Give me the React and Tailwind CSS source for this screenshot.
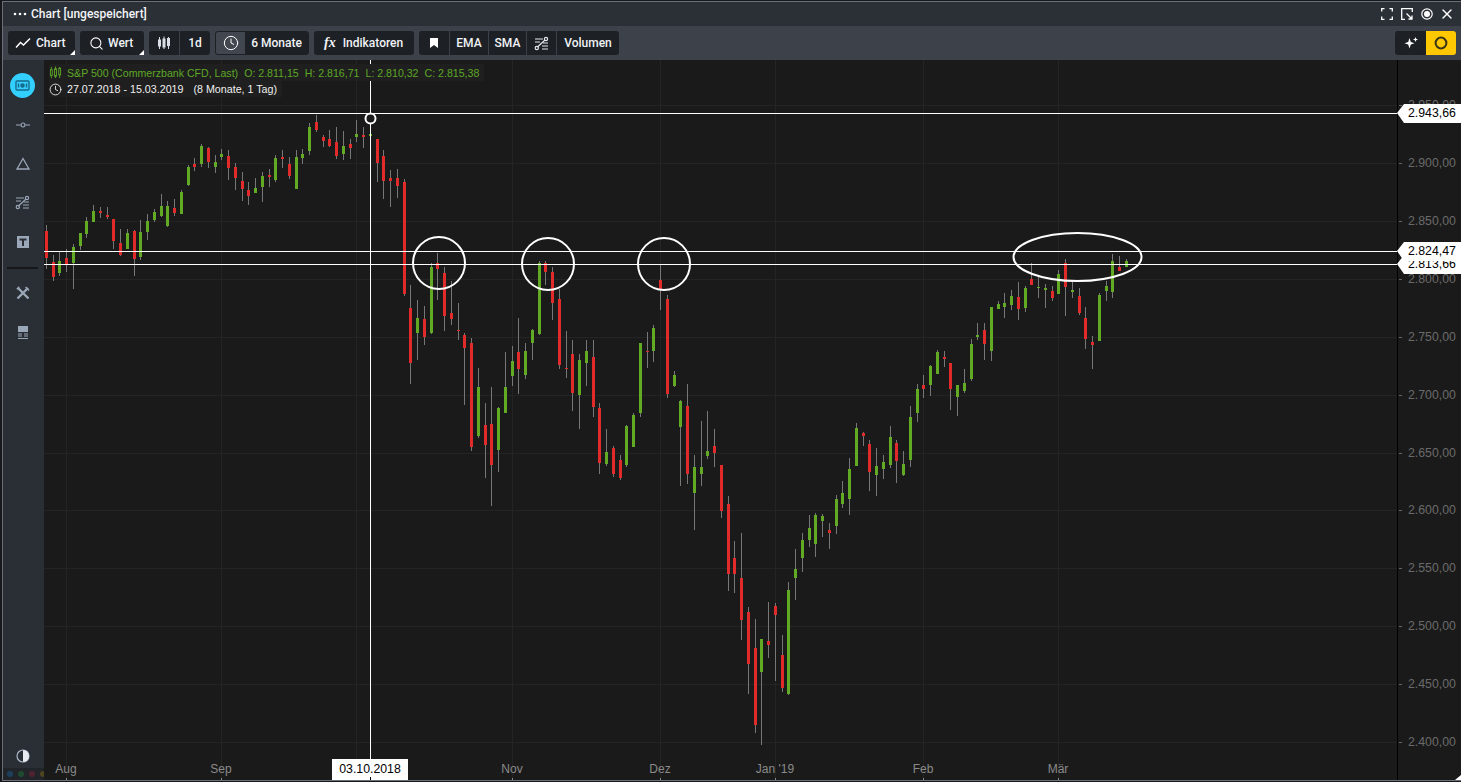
import React from 'react';
import { Clock, Search, X } from 'lucide-react';

// [rot?, Körper oben, Körper unten, Docht oben, Docht unten] in Pixeln
const candles = [
  [1,231,258,225,269],[1,262,277,255,281],[0,261,273,252,276],[1,258,264,249,272],[0,247,263,244,289],
  [0,233,246,233,250],[0,221,234,217,238],[0,211,222,205,222],[1,211,213,207,218],[1,215,217,207,219],
  [1,219,241,219,249],[1,243,255,229,256],[0,233,249,229,249],[1,231,259,230,276],[0,232,257,220,260],
  [0,221,232,214,240],[0,212,220,209,222],[0,206,216,194,217],[0,206,226,201,227],[1,208,213,199,216],
  [0,192,214,190,214],[0,167,185,165,186],[1,164,167,158,171],[0,146,164,144,167],[1,148,162,147,168],
  [0,162,167,155,173],[0,154,157,149,160],[1,156,168,150,180],[1,167,178,163,190],[1,181,189,172,201],
  [1,190,196,182,205],[0,188,193,178,193],[0,176,187,172,202],[1,175,177,169,187],[0,158,180,155,182],
  [1,157,159,150,168],[1,164,176,157,179],[0,157,189,150,189],[0,154,158,149,164],[0,127,151,123,155],
  [1,122,130,115,132],[1,137,141,135,147],[1,139,146,130,147],[1,142,156,127,159],[0,146,154,131,160],
  [1,144,148,139,159],[0,134,137,120,142],[1,135,137,127,148],[0,134,136,134,136],[1,139,163,139,182],
  [1,156,181,150,199],[1,178,181,170,207],[1,178,186,169,198],[1,182,294,179,296],[1,308,363,285,384],
  [0,318,333,300,360],[1,319,337,306,345],[0,267,333,263,334],[1,263,269,253,300],[1,273,316,267,331],
  [1,313,319,281,325],[1,330,331,303,340],[1,335,348,333,405],[1,343,447,338,451],[0,387,436,368,438],
  [1,425,445,403,478],[1,424,465,387,506],[0,408,450,407,472],[0,387,413,352,413],[0,361,376,346,386],
  [1,352,369,318,394],[0,351,375,343,379],[0,330,343,329,360],[0,263,334,261,335],[1,263,272,261,285],
  [1,272,303,267,320],[1,299,365,289,369],[1,368,369,331,378],[1,354,393,340,411],[0,360,395,354,429],
  [0,351,363,340,386],[1,357,407,340,417],[1,408,463,403,474],[0,452,464,429,466],[1,448,474,446,477],
  [1,460,478,455,480],[0,426,465,425,467],[0,415,447,413,447],[0,343,413,343,417],[1,351,352,332,368],
  [0,328,351,325,362],[1,280,290,265,310],[1,299,394,295,398],[0,375,386,371,387],[0,401,427,400,486],
  [1,406,474,384,484],[0,467,493,455,530],[0,467,474,421,486],[0,451,456,411,459],[1,446,453,429,467],
  [1,465,511,465,518],[1,504,574,496,591],[1,558,574,541,593],[1,578,620,533,640],[1,612,664,607,694],
  [1,648,725,619,733],[0,639,672,639,745],[1,641,645,602,658],[1,606,615,603,681],[1,655,688,635,692],
  [0,590,694,582,695],[0,569,578,549,600],[0,540,558,533,572],[0,528,540,515,547],[0,515,544,513,557],
  [0,516,521,514,537],[1,530,533,523,549],[0,499,526,495,534],[0,493,504,481,508],[0,469,499,458,515],
  [0,428,466,423,466],[1,433,436,432,446],[1,444,472,440,491],[0,466,475,448,496],[0,462,469,455,479],
  [0,437,465,426,468],[1,443,461,440,483],[0,464,475,451,476],[0,417,460,406,467],[0,389,413,384,422],
  [1,385,389,375,398],[0,366,385,365,396],[0,352,374,350,374],[1,357,359,351,367],[1,363,389,363,410],
  [0,385,397,385,416],[0,383,391,369,393],[0,344,379,339,381],[0,335,337,323,340],[1,330,344,323,360],
  [0,307,351,307,361],[0,304,309,301,309],[0,303,307,293,318],[0,296,305,290,310],[1,297,309,282,320],
  [0,288,308,286,312],[1,279,285,263,285],[0,287,288,276,298],[0,288,290,284,308],[1,291,298,286,301],
  [0,274,294,270,294],[1,263,287,259,316],[0,290,292,282,298],[1,296,313,288,315],[1,318,339,307,349],
  [1,342,345,336,369],[0,295,341,293,341],[0,286,291,281,301],[0,261,292,254,298],[1,267,271,256,271],
  [0,261,267,259,267],
];

const priceTicks = [
  ['2.950,00', 105], ['2.900,00', 163], ['2.850,00', 221], ['2.800,00', 279], ['2.750,00', 337], ['2.700,00', 395],
  ['2.650,00', 453], ['2.600,00', 510], ['2.550,00', 568], ['2.500,00', 626], ['2.450,00', 684], ['2.400,00', 742],
];
const monthTicks = [['Aug', 66], ['Sep', 221], ['', 356], ['Nov', 512], ['Dez', 660], ["Jan '19", 775], ['Feb', 923], ['Mär', 1058]];

const PriceTag = ({ y, label }) => (
  <g>
    <polygon points={`1397,${y} 1404,${y - 9} 1461,${y - 9} 1461,${y + 10} 1404,${y + 10}`} fill="#ffffff" />
    <text x="1408" y={y + 4} fontSize="12.3" fill="#000000">{label}</text>
  </g>
);

const Chart = () => (
  <svg viewBox="44 60 1417 720" className="block w-full h-full" style={{ fontFamily: '"Liberation Sans", Arial, sans-serif' }}>
    <g shapeRendering="crispEdges">
      {priceTicks.map(([label, y]) => (
        <rect key={label} x="44" y={y} width="1353" height="1" fill="#242424" />
      ))}
      {monthTicks.map(([label, x]) => (
        <rect key={x} x={x} y="60" width="1" height="720" fill="#242424" />
      ))}
      {candles.map(([red, top, bottom, wickTop, wickBottom], i) => {
        const x = Math.floor(46.3 + i * 6.75);
        return (
          <g key={i}>
            <rect x={x} y={wickTop} width="1" height={wickBottom - wickTop} fill="#777777" />
            <rect x={x - 1} y={top} width="3" height={Math.max(bottom - top, 1)} fill={red ? '#e12a2a' : '#62aa24'} />
          </g>
        );
      })}
      <rect x="1397" y="60" width="1" height="720" fill="#000000" />
      {priceTicks.map(([label, y]) => (
        <rect key={label} x="1399" y={y} width="3" height="1" fill="#666666" />
      ))}
      {monthTicks.map(([label, x]) => (
        <rect key={x} x={x} y="778" width="1" height="2" fill="#888888" />
      ))}
      <rect x="44" y="113" width="1353" height="1" fill="#ffffff" />
      <rect x="44" y="251" width="1353" height="1" fill="#ffffff" />
      <rect x="44" y="264" width="1353" height="1" fill="#ffffff" />
      <rect x="370" y="60" width="1" height="700" fill="#ffffff" />
    </g>

    {priceTicks.map(([label, y]) => (
      <text key={label} x="1408" y={y + 3.5} fontSize="12.3" fill="#6a6a6a">{label}</text>
    ))}
    {monthTicks.map(([label, x]) => (
      <text key={x} x={x} y="773" fontSize="12" fill="#8a8a8a" textAnchor="middle">{label}</text>
    ))}

    <g fill="none" stroke="#ffffff" strokeWidth="2">
      <circle cx="439" cy="263" r="26" />
      <circle cx="548" cy="264" r="26" />
      <circle cx="664" cy="264" r="26" />
      <ellipse cx="1077.5" cy="257" rx="64" ry="24" />
      <circle cx="370.5" cy="118.5" r="5" fill="#1a1a1a" />
    </g>

    <PriceTag y={264} label="2.813,66" />
    <PriceTag y={251} label="2.824,47" />
    <PriceTag y={113} label="2.943,66" />

    <rect x="332" y="759" width="76" height="21" fill="#ffffff" />
    <text x="370" y="773" fontSize="12.3" fill="#000000" textAnchor="middle">03.10.2018</text>
    <rect x="370" y="777" width="1" height="3" fill="#000000" />
    <polygon points="1461,775 1461,780 1455,780" fill="#ffffff" />
  </svg>
);

const LineIcon = () => (
  <svg width="16" height="12" viewBox="0 0 16 12" fill="none" stroke="#ffffff" strokeWidth="1.5">
    <path d="M1 10.5 L5.5 5.5 L8.5 8 L15 1.5" />
  </svg>
);

const CandleIcon = ({ color = '#d8dde6', size = 14, hollow = false }) => (
  <svg width={size} height={size} viewBox="0 0 14 14" fill="none" stroke={color} strokeWidth="1">
    <path d="M2.5 1 V4 M2.5 10 V13 M7 0.5 V3 M7 11 V13 M11.5 1 V2.5 M11.5 9.5 V13" />
    <rect x="1.5" y="4" width="2" height="6" fill={hollow ? 'none' : color} />
    <rect x="6" y="3" width="2" height="8" fill={hollow ? 'none' : color} />
    <rect x="10.5" y="2.5" width="2" height="7" fill={hollow ? 'none' : color} />
  </svg>
);

const SliderIcon = ({ color = '#e6e9ee' }) => (
  <svg width="15" height="15" viewBox="0 0 15 15" fill="none" stroke={color} strokeWidth="1.2">
    <path d="M1 3 H9 M1 6 H6 M9 7 H14 M8 10 H14 M8 13 H14" />
    <path d="M3.5 11 L11 4" />
    <circle cx="12" cy="3" r="1.6" />
    <circle cx="2.8" cy="12" r="1.6" />
  </svg>
);

const Corner = () => (
  <svg width="5" height="5" viewBox="0 0 5 5" className="absolute right-0 bottom-0">
    <polygon points="5,0 5,5 0,5" fill="#ffffff" />
  </svg>
);

const Group = ({ className = '', children }) => (
  <div className={`relative flex items-center h-6 rounded-[3px] bg-[#1d2025] text-[12px] font-medium text-[#f0f2f5] ${className}`}>
    {children}
  </div>
);

const Toolbar = () => (
  <div className="flex items-center gap-[5px] h-[34px] pl-[5px] pr-[5px] bg-[#3d4149]">
    <Group className="w-[67px] pl-[7px] gap-[5px]"><LineIcon />Chart<Corner /></Group>
    <Group className="w-[64px] pl-[9px] gap-[4px]"><Search size={15} strokeWidth={1.7} color="#ffffff" />Wert<Corner /></Group>
    <Group className="w-[61px]">
      <div className="flex items-center justify-center w-[31px] h-full border-r border-[#3d4149]"><CandleIcon /></div>
      <div className="flex-1 text-center">1d</div>
    </Group>
    <Group className="w-[94px] border border-[#1d2025] overflow-hidden">
      <div className="flex items-center justify-center w-[29px] h-full bg-[#42464e]"><Clock size={16} strokeWidth={1.5} color="#ffffff" /></div>
      <div className="flex-1 text-center">6 Monate</div>
    </Group>
    <Group className="w-[100px] pl-[10px] gap-[7px]">
      <span className="font-['Liberation_Serif',serif] italic font-bold text-[14px] leading-none">fx</span>
      Indikatoren
    </Group>
    <Group className="w-[200px]">
      <div className="flex items-center justify-center w-[30px] h-full">
        <svg width="8" height="10" viewBox="0 0 8 10"><path d="M0 0 H8 V10 L4 7 L0 10 Z" fill="#ffffff" /></svg>
      </div>
      <div className="flex items-center justify-center w-[39px] h-full border-l border-[#3d4149]">EMA</div>
      <div className="flex items-center justify-center w-[38px] h-full border-l border-[#3d4149]">SMA</div>
      <div className="flex items-center justify-center w-[30px] h-full border-l border-[#3d4149]"><SliderIcon /></div>
      <div className="flex flex-1 items-center justify-center h-full border-l border-[#3d4149]">Volumen</div>
    </Group>
    <div className="ml-auto flex h-6 w-[61px] rounded-[3px] overflow-hidden">
      <div className="flex items-center justify-center w-[31px] bg-[#1d2025]">
        <svg width="14" height="14" viewBox="0 0 14 14" fill="#ffffff">
          <path d="M5.5 2 L6.8 6 L10.5 7.3 L6.8 8.6 L5.5 12.5 L4.2 8.6 L0.5 7.3 L4.2 6 Z" />
          <path d="M11.5 1 L12.2 2.8 L14 3.5 L12.2 4.2 L11.5 6 L10.8 4.2 L9 3.5 L10.8 2.8 Z" />
        </svg>
      </div>
      <div className="flex flex-1 items-center justify-center bg-[#ffc800]">
        <svg width="14" height="14" viewBox="0 0 14 14" fill="none" stroke="#3a3416" strokeWidth="2"><circle cx="7" cy="7" r="5.4" /></svg>
      </div>
    </div>
  </div>
);

const TitleBar = () => (
  <div className="flex items-center h-6 pl-[10px] pr-[8px] bg-[#2b2f36] text-[12px] font-medium text-[#f2f4f7]">
    <svg width="14" height="4" viewBox="0 0 14 4" className="mr-[4px]" fill="#ffffff">
      <circle cx="2" cy="2" r="1.3" /><circle cx="7" cy="2" r="1.3" /><circle cx="12" cy="2" r="1.3" />
    </svg>
    Chart [ungespeichert]
    <div className="ml-auto flex items-center gap-[8px]">
      <svg width="12" height="12" viewBox="0 0 12 12" fill="none" stroke="#ffffff" strokeWidth="1.3">
        <path d="M0.7 3.5 V0.7 H3.5 M8.5 0.7 H11.3 V3.5 M11.3 8.5 V11.3 H8.5 M3.5 11.3 H0.7 V8.5" />
      </svg>
      <svg width="12" height="12" viewBox="0 0 12 12" fill="none" stroke="#ffffff" strokeWidth="1.3">
        <path d="M11.3 4 V0.7 H0.7 V11.3 H4 M5.5 5.5 L11 11 M11 7.5 V11 H7.5" />
      </svg>
      <svg width="12" height="12" viewBox="0 0 12 12" fill="#ffffff" stroke="#ffffff" strokeWidth="1.2">
        <circle cx="6" cy="6" r="5.2" fill="none" /><circle cx="6" cy="6" r="2.4" />
      </svg>
      <X size={16} strokeWidth={2} color="#ffffff" className="-mx-[2px]" />
    </div>
  </div>
);

const sideIcon = '#9aa7b8';

const Sidebar = () => (
  <div className="relative flex flex-col items-center w-[41px] shrink-0 pr-[2px] bg-[#2a2e35]">
    <div className="flex items-center justify-center mt-[13px] w-[25px] h-[25px] rounded-full bg-[#33cfff]">
      <svg width="15" height="11" viewBox="0 0 15 11" fill="none" stroke="#176a8a" strokeWidth="1.4">
        <rect x="1" y="1" width="13" height="9" rx="1" /><circle cx="7.5" cy="5.5" r="1.6" fill="#176a8a" />
        <path d="M3.5 3.5 V7.5 M11.5 3.5 V7.5" />
      </svg>
    </div>
    <svg width="14" height="6" viewBox="0 0 14 6" className="mt-[24px]" fill="none" stroke={sideIcon} strokeWidth="1.2">
      <path d="M0 3 H4.5 M9.5 3 H14" /><circle cx="7" cy="3" r="2" />
    </svg>
    <svg width="14" height="13" viewBox="0 0 14 13" className="mt-[29px]" fill="none" stroke={sideIcon} strokeWidth="1.3">
      <path d="M7 1.5 L13 12 H1 Z" />
    </svg>
    <div className="mt-[25px]"><SliderIcon color={sideIcon} /></div>
    <svg width="12" height="12" viewBox="0 0 12 12" className="mt-[26px]">
      <rect width="12" height="12" fill={sideIcon} />
      <path d="M2.5 2.5 H9.5 V4.5 H7 V10 H5 V4.5 H2.5 Z" fill="#2a2e35" />
    </svg>
    <div className="mt-[19px] w-[31px] h-[2px] bg-[#16181b]" />
    <svg width="14" height="14" viewBox="0 0 14 14" className="mt-[17px]" fill="none" stroke={sideIcon} strokeWidth="2.4">
      <path d="M1.5 12.5 L12 2 M2 2 L12.5 12.5" />
      <path d="M9.5 1 L13 4.5 M0.8 3.2 L3.2 0.8" strokeWidth="1.4" />
    </svg>
    <svg width="12" height="13" viewBox="0 0 12 13" className="mt-[26px]">
      <rect x="1" y="0" width="10" height="6" fill={sideIcon} />
      <path d="M1 8 H5 M7 8 H11 M1 10 H5 M7 10 H11 M1 12.5 H11" stroke={sideIcon} strokeWidth="1.1" />
    </svg>
    <svg width="14" height="14" viewBox="0 0 14 14" className="mt-auto mb-[17px]">
      <circle cx="7" cy="7" r="6" fill="none" stroke="#aeb9c9" strokeWidth="1.2" />
      <path d="M7 1 A6 6 0 0 1 7 13 Z" fill="#e8ebef" />
    </svg>
    <div className="absolute left-0 bottom-0 flex items-center gap-[5px] w-[48px] h-3 pl-[4px] bg-[#212429]">
      <span className="w-[6px] h-[6px] rounded-full bg-[#1d3f5c]" />
      <span className="w-[6px] h-[6px] rounded-full bg-[#1f4a30]" />
      <span className="w-[6px] h-[6px] rounded-full bg-[#4f2230]" />
      <span className="w-[6px] h-[6px] rounded-full bg-[#4f4420]" />
    </div>
  </div>
);

const Legend = () => (
  <div className="absolute left-[5px] top-[4px] flex flex-col items-start font-['Liberation_Sans',Arial,sans-serif] leading-[16px]">
    <div className="flex items-center h-[17px] pr-[5px] text-[10.6px] bg-[#1f1f1f] text-[#5ea826]">
      <CandleIcon color="#5ea826" size={13} hollow />
      <span className="ml-[5px] mr-[6px]">S&amp;P 500 (Commerzbank CFD, Last)</span>
      <span className="mr-[6px]">O: 2.811,15</span>
      <span className="mr-[6px]">H: 2.816,71</span>
      <span className="mr-[6px]">L: 2.810,32</span>
      <span>C: 2.815,38</span>
    </div>
    <div className="flex items-center h-4 pr-[5px] text-[10.7px] bg-[#1f1f1f] text-[#f0f0f0]">
      <Clock size={13} strokeWidth={1.5} color="#ffffff" />
      <span className="ml-[5px] mr-[10px]">27.07.2018 - 15.03.2019</span>
      <span>(8 Monate, 1 Tag)</span>
    </div>
  </div>
);

export default function App() {
  return (
    <div className="h-[782px] w-full overflow-hidden pt-px pl-[2px] pb-px bg-[#16181b] font-['Roboto',sans-serif]">
      <div className="flex flex-col h-full border-t border-l border-b border-[#6b7078]">
        <TitleBar />
        <Toolbar />
        <div className="flex flex-1 min-h-0">
          <Sidebar />
          <div className="relative flex-1 min-w-0 bg-[#1a1a1a]">
            <Chart />
            <Legend />
          </div>
        </div>
      </div>
    </div>
  );
}
